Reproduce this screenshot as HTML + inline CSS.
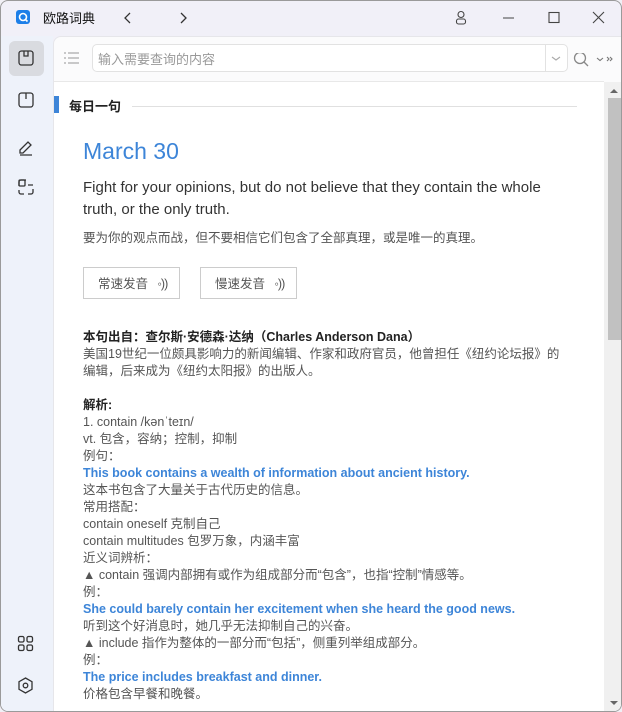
<!DOCTYPE html>
<html><head><meta charset="utf-8"><style>
*{margin:0;padding:0;box-sizing:border-box}
body{width:622px;height:712px;overflow:hidden;background:#f1f0f6;font-family:"Liberation Sans","Noto Sans CJK SC",sans-serif;position:relative}
.win{position:absolute;left:0;top:0;width:622px;height:712px;border:1px solid #9a9a9a;border-radius:8px;overflow:hidden;background:#f1f0f8}
.title{position:absolute;left:42px;top:7px;font-size:13px;color:#111}
.side{position:absolute;left:0;top:35px;width:52px;height:677px;background:#eef2fa}
.main{position:absolute;left:52px;top:35px;width:570px;height:677px;background:#fbfbfc;border-top:1px solid #e6e6ea;border-left:1px solid #e6e6ea;border-top-left-radius:8px}
.search{position:absolute;left:91px;top:43px;width:476px;height:28px;border:1px solid #e2e2e2;border-radius:5px;background:#fff;font-size:13px;color:#999;padding:4px 5px}
.content{position:absolute;left:53px;top:80px;width:550px;height:632px;background:#fff;border-top:1px solid #e8e8e8}
.t{position:absolute;left:82px;font-size:12.5px;color:#555;white-space:nowrap;line-height:17px}
.b{color:#222;font-weight:bold}
.bl{color:#3d85d8;font-weight:bold}
.btn{position:absolute;top:266px;width:97px;height:32px;border:1px solid #ccc;font-size:12.5px;color:#555;padding:5px 0 0 14px}
</style></head><body><div class="win">
<svg style="position:absolute;left:15px;top:9px" width="14" height="14"><rect width="14" height="14" rx="3" fill="#1d7fe8"/><circle cx="7" cy="7" r="3.5" fill="none" stroke="#fff" stroke-width="1.6"/><path d="M9 9l2.5 2.5" stroke="#fff" stroke-width="1.6"/></svg>
<div class="title">欧路词典</div>
<svg style="position:absolute;left:120px;top:10px" width="70" height="14" fill="none" stroke="#333" stroke-width="1.3"><path d="M9 2l-5 5 5 5"/><path d="M60 2l5 5-5 5"/></svg>
<svg style="position:absolute;left:452px;top:9px" width="160" height="16" fill="none" stroke="#444" stroke-width="1.1"><circle cx="8" cy="4.5" r="3"/><rect x="3.5" y="9" width="9" height="5" rx="2"/><path d="M50 8h11"/><rect x="96" y="2.5" width="10" height="10"/><path d="M140 2l11 11M151 2l-11 11"/></svg>
<div class="side">
<div style="position:absolute;left:8px;top:5px;width:35px;height:35px;background:#d9dbe0;border-radius:6px"></div>
<svg style="position:absolute;left:16px;top:13px" width="20" height="180" fill="none" stroke="#333" stroke-width="1.3"><rect x="2" y="2" width="14" height="14" rx="2.5"/><path d="M7 2v5h4V2"/><rect x="2" y="44" width="14" height="14" rx="2.5"/><path d="M9 44v6"/><path d="M3 101l8-8 3 3-8 8H3zM3 106h12"/><path d="M9 131H4a2 2 0 00-2 2v4M2 141v2a2 2 0 002 2h3M11 145h3a2 2 0 002-2v-3M11 136h5"/><rect x="2" y="131" width="6" height="6" rx="1"/></svg>
<svg style="position:absolute;left:16px;top:599px" width="20" height="62" fill="none" stroke="#333" stroke-width="1.3"><rect x="1.5" y="1.5" width="5.5" height="5.5" rx="1.5"/><rect x="10" y="1.5" width="5.5" height="5.5" rx="1.5"/><rect x="1.5" y="10" width="5.5" height="5.5" rx="1.5"/><rect x="10" y="10" width="5.5" height="5.5" rx="1.5"/><path d="M8.5 43l6.5 3.7v7.6L8.5 58 2 54.3v-7.6z"/><circle cx="8.5" cy="50.5" r="2.3"/></svg>
</div>
<div class="main"></div>
<svg style="position:absolute;left:62px;top:50px" width="18" height="14" stroke="#aaa" stroke-width="1.2"><path d="M1 2h2M5 2h11M1 7h2M5 7h11M1 12h2M5 12h11"/></svg>
<div class="search">输入需要查询的内容</div>
<div style="position:absolute;left:544px;top:44px;width:1px;height:26px;background:#e2e2e2"></div>
<svg style="position:absolute;left:550px;top:52px" width="70" height="14" fill="none" stroke="#aaa" stroke-width="1.1"><path d="M1 4l4 3 4-3"/><circle cx="29" cy="5" r="5.5" stroke="#888" stroke-width="1.3"/><path d="M33 9l4 4" stroke="#888" stroke-width="1.3"/><path d="M46 5l3 2.5 3-2.5M56 4l2 2-2 2M59 4l2 2-2 2" stroke="#777"/></svg>
<div class="content"></div>
<div style="position:absolute;left:603px;top:81px;width:17px;height:630px;background:#f0f0f0"></div>
<div style="position:absolute;left:607px;top:97px;width:13px;height:242px;background:#c1c1c1"></div>
<svg style="position:absolute;left:607px;top:86px" width="12" height="620" fill="#666"><path d="M2 6l4-4 4 4z"/><path d="M2 614l4 4 4-4z"/></svg>
<div style="position:absolute;left:53px;top:95px;width:5px;height:17px;background:#3d85d8"></div>
<div style="position:absolute;left:68px;top:95px;font-size:13px;font-weight:bold;color:#222">每日一句</div>
<div style="position:absolute;left:131px;top:105px;width:445px;height:1px;background:#e0e0e0"></div>
<div style="position:absolute;left:82px;top:137px;font-size:23px;color:#3d85d8">March 30</div>
<div style="position:absolute;left:82px;top:176px;width:470px;font-size:15px;line-height:22px;color:#333">Fight for your opinions, but do not believe that they contain the whole truth, or the only truth.</div>
<div class="t" style="top:229px;font-size:12.5px">要为你的观点而战，但不要相信它们包含了全部真理，或是唯一的真理。</div>
<div class="btn" style="left:82px">常速发音 <span style="letter-spacing:-1px;margin-left:6px">◦))</span></div>
<div class="btn" style="left:199px">慢速发音 <span style="letter-spacing:-1px;margin-left:6px">◦))</span></div>
<div class="t b" style="top:328px">本句出自：查尔斯·安德森·达纳（Charles Anderson Dana）</div>
<div class="t" style="top:345px">美国19世纪一位颇具影响力的新闻编辑、作家和政府官员，他曾担任《纽约论坛报》的</div>
<div class="t" style="top:362px">编辑，后来成为《纽约太阳报》的出版人。</div>
<div class="t b" style="top:396px">解析:</div>
<div class="t" style="top:413px">1. contain /kənˈteɪn/</div>
<div class="t" style="top:430px">vt. 包含，容纳；控制，抑制</div>
<div class="t" style="top:447px">例句：</div>
<div class="t bl" style="top:464px">This book contains a wealth of information about ancient history.</div>
<div class="t" style="top:481px">这本书包含了大量关于古代历史的信息。</div>
<div class="t" style="top:498px">常用搭配：</div>
<div class="t" style="top:515px">contain oneself 克制自己</div>
<div class="t" style="top:532px">contain multitudes 包罗万象，内涵丰富</div>
<div class="t" style="top:549px">近义词辨析：</div>
<div class="t" style="top:566px">▲ contain 强调内部拥有或作为组成部分而“包含”，也指“控制”情感等。</div>
<div class="t" style="top:583px">例：</div>
<div class="t bl" style="top:600px">She could barely contain her excitement when she heard the good news.</div>
<div class="t" style="top:617px">听到这个好消息时，她几乎无法抑制自己的兴奋。</div>
<div class="t" style="top:634px">▲ include 指作为整体的一部分而“包括”，侧重列举组成部分。</div>
<div class="t" style="top:651px">例：</div>
<div class="t bl" style="top:668px">The price includes breakfast and dinner.</div>
<div class="t" style="top:685px">价格包含早餐和晚餐。</div>
</div></body></html>
